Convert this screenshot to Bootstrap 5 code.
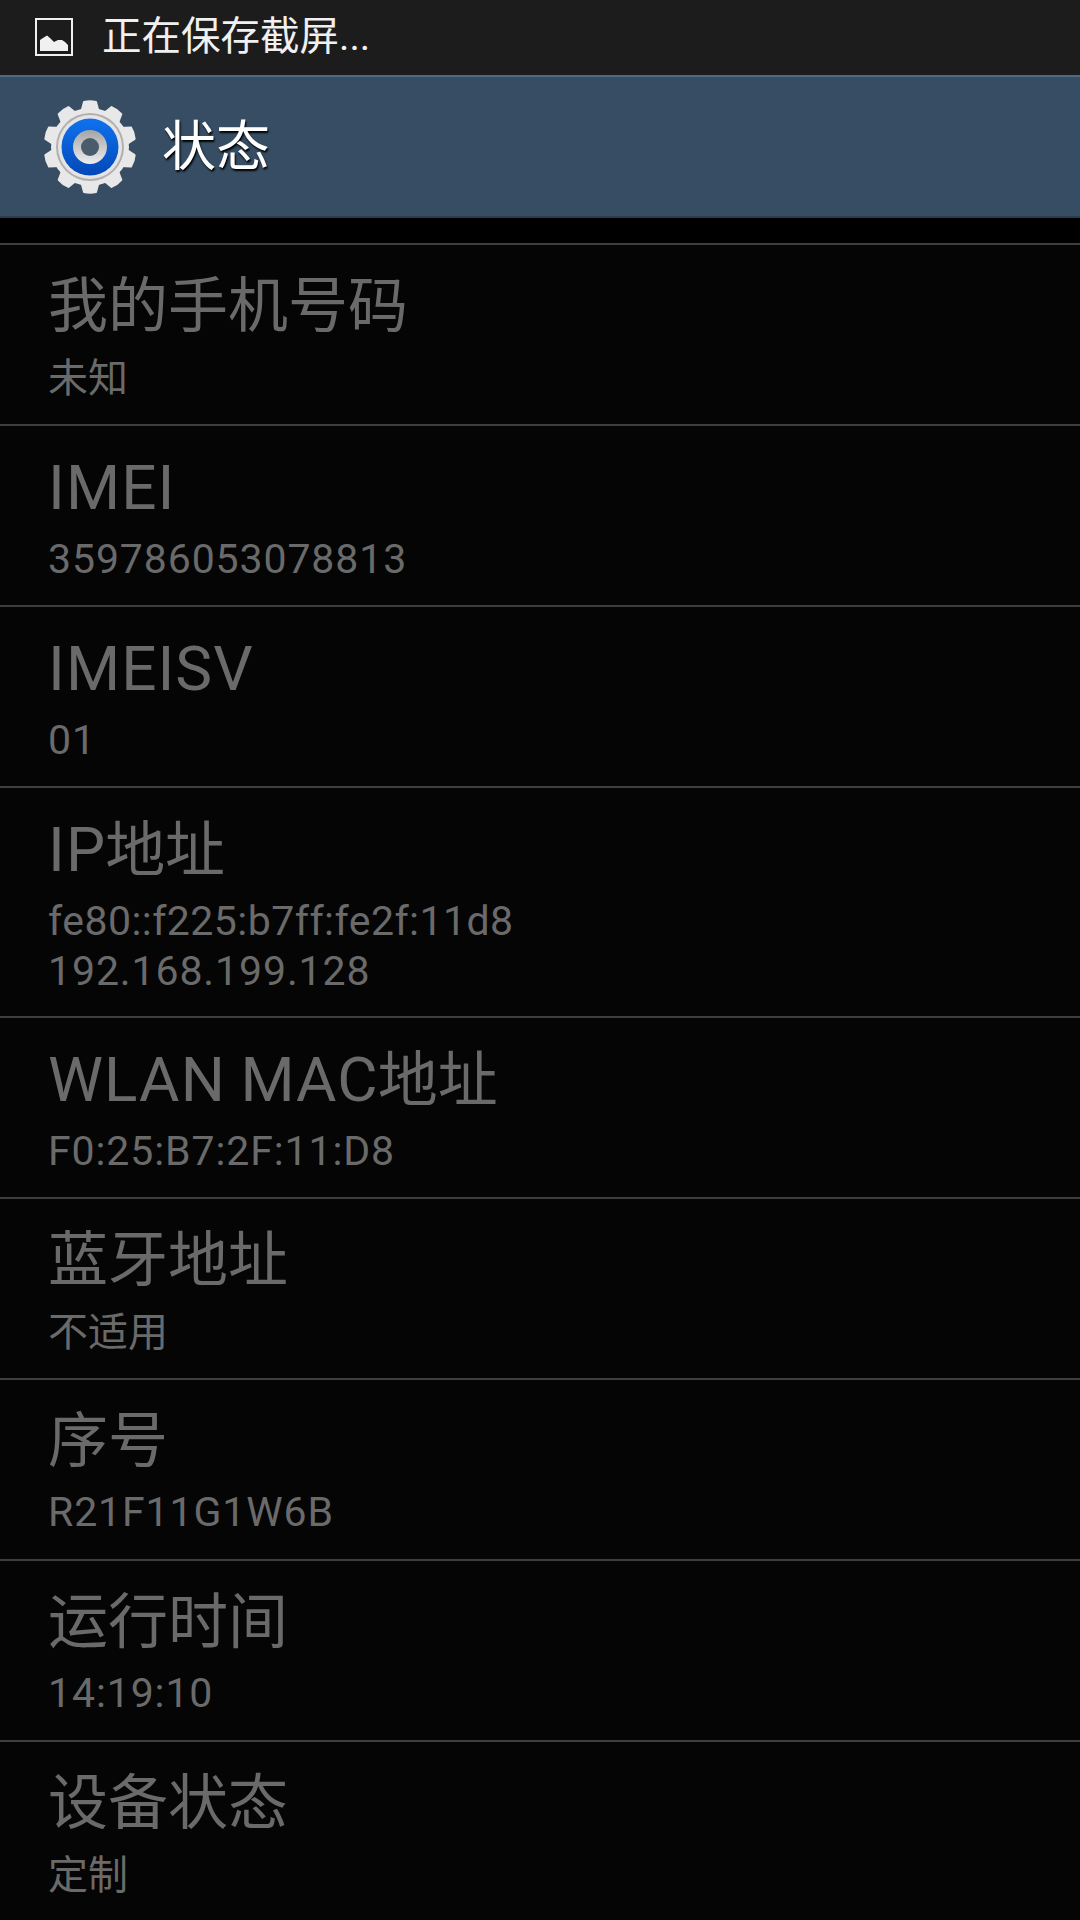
<!DOCTYPE html>
<html lang="zh">
<head>
  <meta charset="UTF-8" />
  <title>状态</title>
  <link href="https://cdn.jsdelivr.net/npm/bootstrap@5.3.0/dist/css/bootstrap.min.css" rel="stylesheet"/>
  <style>
    html, body { height: 1920px; overflow: hidden; }
    body {
      background-color: #050505;
      font-family: Roboto, "Noto Sans CJK SC", sans-serif;
    }
    .ticker {
      height: 75px;
      background-color: #1c1c1c;
      padding-left: 35px;
      padding-bottom: 2px;
      gap: 29px;
      color: #f0f0f0;
      font-size: 39.5px;
    }
    .titlebar {
      height: 143px;
      background-color: #364d63;
      border-top: 2px solid #4d6a85;
      border-bottom: 2px solid #2a3d50;
      padding-left: 42px;
      gap: 24px;
      color: #fff;
      font-size: 54px;
      text-shadow: 1px 2px 2px #000;
    }
    .titlebar span { margin-top: 2px; }
    .gap-strip { height: 25px; background-color: #000; }
    .info-row {
      height: 181px;
      padding: 26px 0 0 48px;
      border-top: 2px solid #3e3e3e;
      color: #6a6a6a;
    }
    .info-row.tall { height: 230px; }
    .info-title { font-size: 60px; line-height: 72px; }
    .info-title .lat { font-size: 62px; letter-spacing: 1.07px; word-spacing: -2px; margin-right: -1px; }
    .info-sub { font-size: 40px; line-height: 50px; margin-top: 11px; }
    .info-sub.lat { font-size: 41px; letter-spacing: .9px; margin-top: 9px; }
    .ip-line { letter-spacing: .45px; }
  </style>
</head>
<body>

  <!-- Barra de estado -->
  <div class="ticker d-flex align-items-center">
    <svg width="38" height="38" viewBox="0 0 38 38">
      <rect x="1" y="1" width="36" height="36" fill="none" stroke="#f0f0f0" stroke-width="2"/>
      <path d="M5 33V22L8 20 12 17.5 15 20 19 24 23 22 27 22 30 24 33 27V33Z" fill="#f0f0f0"/>
    </svg>
    <span>正在保存截屏...</span>
  </div>

  <!-- Cabecera -->
  <div class="titlebar d-flex align-items-center">
    <svg width="96" height="96" viewBox="0 0 96 96">
      <defs>
        <linearGradient id="blueFill" x1="0" y1="0" x2="0" y2="1">
          <stop offset="0" stop-color="#0f72ee"/>
          <stop offset="1" stop-color="#0348b8"/>
        </linearGradient>
        <linearGradient id="ringFill" x1="0" y1="0" x2="0" y2="1">
          <stop offset="0" stop-color="#a4a4a4"/>
          <stop offset="1" stop-color="#eeeeee"/>
        </linearGradient>
        <path id="gearTooth" d="M39 14L42 3Q48 1.5 54 3L57 14Z"/>
      </defs>
      <g fill="#e8e8e8" stroke="#e8e8e8" stroke-width="2" stroke-linejoin="round">
        <circle cx="48" cy="48" r="38"/>
        <use href="#gearTooth"/>
        <use href="#gearTooth" transform="rotate(36 48 48)"/>
        <use href="#gearTooth" transform="rotate(72 48 48)"/>
        <use href="#gearTooth" transform="rotate(108 48 48)"/>
        <use href="#gearTooth" transform="rotate(144 48 48)"/>
        <use href="#gearTooth" transform="rotate(180 48 48)"/>
        <use href="#gearTooth" transform="rotate(216 48 48)"/>
        <use href="#gearTooth" transform="rotate(252 48 48)"/>
        <use href="#gearTooth" transform="rotate(288 48 48)"/>
        <use href="#gearTooth" transform="rotate(324 48 48)"/>
      </g>
      <circle cx="48" cy="48" r="34" fill="#b0b0b0"/>
      <circle cx="48" cy="48" r="32" fill="#e4e4e4"/>
      <circle cx="48" cy="48" r="28.5" fill="url(#blueFill)"/>
      <circle cx="48" cy="48" r="17" fill="url(#ringFill)"/>
      <circle cx="48" cy="48" r="9" fill="#4a5b6b"/>
    </svg>
    <span>状态</span>
  </div>

  <div class="gap-strip"></div>

  <!-- Lista -->
  <div class="info-row"><div class="info-title">我的手机号码</div><div class="info-sub">未知</div></div>
  <div class="info-row"><div class="info-title"><span class="lat">IMEI</span></div><div class="info-sub lat">359786053078813</div></div>
  <div class="info-row"><div class="info-title"><span class="lat">IMEISV</span></div><div class="info-sub lat">01</div></div>
  <div class="info-row tall"><div class="info-title"><span class="lat">IP</span>地址</div><div class="info-sub lat"><span class="ip-line">fe80::f225:b7ff:fe2f:11d8</span><br>192.168.199.128</div></div>
  <div class="info-row"><div class="info-title"><span class="lat">WLAN MAC</span>地址</div><div class="info-sub lat">F0:25:B7:2F:11:D8</div></div>
  <div class="info-row"><div class="info-title">蓝牙地址</div><div class="info-sub">不适用</div></div>
  <div class="info-row"><div class="info-title">序号</div><div class="info-sub lat">R21F11G1W6B</div></div>
  <div class="info-row"><div class="info-title">运行时间</div><div class="info-sub lat">14:19:10</div></div>
  <div class="info-row"><div class="info-title">设备状态</div><div class="info-sub">定制</div></div>

  <script src="https://cdn.jsdelivr.net/npm/bootstrap@5.3.0/dist/js/bootstrap.bundle.min.js"></script>
</body>
</html>
